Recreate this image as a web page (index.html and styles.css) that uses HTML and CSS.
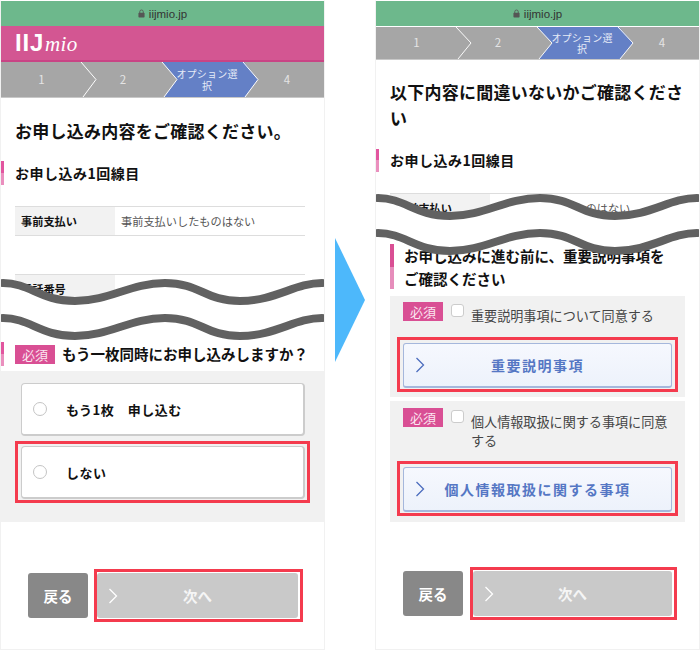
FILE: index.html
```html
<!DOCTYPE html>
<html lang="ja">
<head>
<meta charset="utf-8">
<title>IIJmio</title>
<link rel="stylesheet" href="styles.css">
</head>
<body>
<main class="page">
  <section class="phone">
    <div class="urlbar"><svg class="lock" viewBox="0 0 8 10"><path d="M2 4.500V3a2 2 0 0 1 4 0v1.500" fill="none" stroke="#555" stroke-width="1"/><rect x=".5" y="4.200" width="7" height="5.300" rx=".8" fill="#555"/></svg>iijmio.jp</div>
    <header class="brand"><span class="logo-main">IIJ</span><span class="logo-sub">mio</span></header>
    <div class="steps">
      <svg class="steps-bg" viewBox="0 0 323 36" preserveAspectRatio="none"><polygon points="161,0 243,0 257,18 244,36 163,36 176,18" fill="#6480c6"/><polyline points="80,0 95,18 82,36" fill="none" stroke="#fff" stroke-width="1"/><polyline points="161,0 176,18 163,36" fill="none" stroke="#fff" stroke-width="1"/><polyline points="242,0 257,18 244,36" fill="none" stroke="#fff" stroke-width="1"/></svg>
      <span class="step">1</span><span class="step">2</span><span class="step step-active">オプション選択</span><span class="step">4</span>
    </div>
    <h1 class="title">お申し込み内容をご確認ください。</h1>
    <h2 class="bar-head">お申し込み1回線目</h2>
    <dl class="row row-first"><dt>事前支払い</dt><dd>事前支払いしたものはない</dd></dl>
    <dl class="row row-second"><dt>電話番号</dt><dd></dd></dl>
    <div class="ask"><span class="badge">必須</span><span class="ask-text">もう一枚同時にお申し込みしますか？</span></div>
    <div class="choices">
      <div class="choice"><span class="radio"></span>もう1枚　申し込む</div>
      <div class="choice mark"><span class="radio"></span>しない</div>
    </div>
    <div class="actions actions-left">
      <a class="back">戻る</a>
      <a class="next mark"><svg class="chev" viewBox="0 0 10 16"><polyline points="1.500,1 8.500,8 1.500,15" fill="none" stroke="#fff" stroke-width="1.300"/></svg>次へ</a>
    </div>
    <svg class="wave wave-left" viewBox="0 0 325 66"><path d="M3 6C30 6 40 24 75 24S130 6 165 6S205 24 240 24S295 6 322 6V41C295 41 275 59 240 59S200 41 165 41S110 59 75 59S30 41 3 41Z" fill="#fff"/><g fill="none" stroke="#616161" stroke-width="8" stroke-linecap="round"><path d="M3 6C30 6 40 24 75 24S130 6 165 6S205 24 240 24S295 6 322 6"/><path d="M3 41C30 41 40 59 75 59S130 41 165 41S205 59 240 59S295 41 322 41"/></g></svg>
  </section>

  <div class="flow-arrow"><svg viewBox="0 0 30 124"><polygon points="0,0 30,62 0,124" fill="#4db8fb"/></svg></div>

  <section class="phone">
    <div class="urlbar"><svg class="lock" viewBox="0 0 8 10"><path d="M2 4.500V3a2 2 0 0 1 4 0v1.500" fill="none" stroke="#555" stroke-width="1"/><rect x=".5" y="4.200" width="7" height="5.300" rx=".8" fill="#555"/></svg>iijmio.jp</div>
    <div class="steps steps-compact">
      <svg class="steps-bg" viewBox="0 0 323 36" preserveAspectRatio="none"><polygon points="161,0 243,0 257,18 244,36 163,36 176,18" fill="#6480c6"/><polyline points="80,0 95,18 82,36" fill="none" stroke="#fff" stroke-width="1"/><polyline points="161,0 176,18 163,36" fill="none" stroke="#fff" stroke-width="1"/><polyline points="242,0 257,18 244,36" fill="none" stroke="#fff" stroke-width="1"/></svg>
      <span class="step">1</span><span class="step">2</span><span class="step step-active">オプション選択</span><span class="step">4</span>
    </div>
    <h1 class="title title-wrap">以下内容に間違いないかご確認ください</h1>
    <h2 class="bar-head bar-head-compact">お申し込み1回線目</h2>
    <dl class="row row-first row-compact"><dt>事前支払い</dt><dd>事前支払いしたものはない</dd></dl>
    <h2 class="notice">お申し込みに進む前に、重要説明事項をご確認ください</h2>
    <div class="agree agree-first">
      <div class="agree-head"><span class="badge">必須</span><span class="check"></span><span class="agree-text">重要説明事項について同意する</span></div>
      <a class="doc mark"><svg class="chev" viewBox="0 0 10 16"><polyline points="1.500,1 8.500,8 1.500,15" fill="none" stroke="#4c6dbe" stroke-width="1.300"/></svg>重要説明事項</a>
    </div>
    <div class="agree">
      <div class="agree-head"><span class="badge">必須</span><span class="check"></span><span class="agree-text">個人情報取扱に関する事項に同意する</span></div>
      <a class="doc mark"><svg class="chev" viewBox="0 0 10 16"><polyline points="1.500,1 8.500,8 1.500,15" fill="none" stroke="#4c6dbe" stroke-width="1.300"/></svg>個人情報取扱に関する事項</a>
    </div>
    <div class="actions actions-right">
      <a class="back">戻る</a>
      <a class="next mark"><svg class="chev" viewBox="0 0 10 16"><polyline points="1.500,1 8.500,8 1.500,15" fill="none" stroke="#fff" stroke-width="1.300"/></svg>次へ</a>
    </div>
    <svg class="wave wave-right" viewBox="0 0 325 66"><path d="M3 6C30 6 40 24 75 24S130 6 165 6S205 24 240 24S295 6 322 6V41C295 41 275 59 240 59S200 41 165 41S110 59 75 59S30 41 3 41Z" fill="#fff"/><g fill="none" stroke="#616161" stroke-width="8" stroke-linecap="round"><path d="M3 6C30 6 40 24 75 24S130 6 165 6S205 24 240 24S295 6 322 6"/><path d="M3 41C30 41 40 59 75 59S130 41 165 41S205 59 240 59S295 41 322 41"/></g></svg>
  </section>
</main>
</body>
</html>
```

FILE: styles.css
```css
* { box-sizing: border-box; }
html, body { margin: 0; padding: 0; background: #fff; }
body { font-family: "Noto Sans CJK JP", "Liberation Sans", sans-serif; color: #111; }
.page { display: flex; align-items: flex-start; width: 700px; height: 650px; overflow: hidden; }
.phone { position: relative; width: 325px; height: 650px; border: 1px solid #f1f1f1; border-top-color: #fff; overflow: hidden; }
.urlbar { display: flex; align-items: center; justify-content: center; gap: 4px; height: 25px; background: #6db88c; color: #333; font: 11.5px "Liberation Sans", sans-serif; }
.lock { width: 7px; height: 9px; }
.brand { display: flex; align-items: baseline; height: 36px; padding: 5px 0 0 14px; background: #d35692; border-bottom: 2px solid #c94485; color: #fff; }
.logo-main { font: bold 24px/24px "Liberation Sans", sans-serif; letter-spacing: .8px; }
.logo-sub { font: italic 21px/24px "Liberation Serif", serif; margin-left: 1px; letter-spacing: .3px; }
.steps { position: relative; display: grid; grid-template-columns: 81px 82px 86px 74px; align-items: center; height: 36px; background: #a6a6a6; border-bottom: 1px solid #c8c8c8; color: #e4e4e4; }
.steps-compact { height: 33px; margin-top: 1px; }
.steps-bg { position: absolute; left: 0; top: 0; width: 323px; height: 100%; }
.step { position: relative; text-align: center; font-size: 11.500px; line-height: 11.500px; }
.step-active { width: 66px; justify-self: center; font-size: 10px; letter-spacing: .2px; color: #e6ebf7; }
.title { margin: 20px 14px 0; font-size: 17px; line-height: 26px; font-weight: 700; color: #111; letter-spacing: .25px; }
.title-wrap { margin-top: 19px; width: 298px; }
.bar-head { margin: 17px 0 0; height: 24px; padding-left: 11px; font-size: 14px; line-height: 24px; font-weight: 700; letter-spacing: .5px; border-left: 3px solid #e2559f; border-image: linear-gradient(#e2559f 50%, #ea8fbe 50%) 1; }
.bar-head-compact { margin-top: 18px; height: 23px; line-height: 23px; }
.row { display: flex; width: 290px; margin: 21px 0 0 14px; border-top: 1px solid #ddd; border-bottom: 1px solid #ddd; font-size: 11.200px; height: 30px; line-height: 28px; }
.row dt { width: 100px; padding-left: 6px; background: #f2f2f2; font-weight: 700; }
.row dd { margin: 0; padding-left: 6px; color: #555; }
.row-second { margin-top: 38px; height: 34px; border-bottom-color: #eee; }
.row-compact { margin-top: 21px; }
.ask { display: flex; align-items: center; height: 24px; margin-top: 34px; padding-left: 11px; border-left: 3px solid #e2559f; border-image: linear-gradient(#e2559f 50%, #ea8fbe 50%) 1; }
.ask-text { margin-left: 7px; font-size: 14.500px; font-weight: 700; line-height: 24px; white-space: nowrap; }
.badge { flex: none; width: 40px; height: 19px; background: #d94f94; color: #fbe6f0; text-align: center; font-size: 13px; line-height: 19px; }
.choices { display: flex; flex-direction: column; gap: 10px; height: 151px; margin-top: 5px; padding: 12px 19px 0 20px; background: #f1f1f1; }
.choice { position: relative; display: flex; align-items: center; height: 53px; padding-left: 11px; background: #fff; border: 1px solid #ccc; border-bottom-width: 2px; border-right-width: 2px; border-radius: 4px; font-size: 13px; font-weight: 700; letter-spacing: .5px; }
.radio { width: 14px; height: 14px; margin-right: 19px; border: 1.500px solid #c4c4c4; border-radius: 50%; background: #fff; }
.mark::after { content: ""; position: absolute; inset: -5px; border: 3px solid #f43b4e; }
.choice.mark::after { inset: -6px -7px -6px -7px; }
.actions { display: flex; margin: 51px 0 0 27px; height: 45px; }
.back { display: flex; align-items: center; justify-content: center; width: 60px; background: #888; border-radius: 3px; color: #fff; font-size: 14.500px; font-weight: 700; }
.next { display: flex; align-items: center; justify-content: center; position: relative; width: 201px; margin-left: 9px; background: #c9c9c9; border-radius: 3px; color: #f5f5f5; font-size: 14.500px; font-weight: 700; }
.next.mark::after { inset: -4px -5px -4px -3px; }
.actions-right { margin: 49px 0 0 27px; }
.actions-right .next { width: 199px; margin-left: 10px; }
.chev { position: absolute; left: 11px; top: 50%; width: 10px; height: 16px; margin-top: -8px; }
.notice { width: 280px; height: 45px; margin: 21px 0 0 14px; padding: 0 0 0 10px; font-size: 14.500px; line-height: 23px; font-weight: 700; border-left: 4px solid #d94f94; border-image: linear-gradient(#d94f94 50%, #e68dbb 50%) 1; }
.agree { width: 295px; margin: 4px 0 0 14px; padding: 7px 13px 10px; background: #f1f1f1; }
.agree-first { margin-top: 7px; padding-top: 6px; padding-bottom: 9px; }
.agree-head { display: flex; align-items: flex-start; min-height: 38px; margin-bottom: 17px; }
.agree-first .agree-head { min-height: 24px; }
.check { flex: none; width: 13px; height: 13px; margin: 2px 7px 0 8px; background: #fff; border: 1px solid #ccc; border-radius: 3px; }
.agree-text { margin-top: 4px; font-size: 13.100px; line-height: 19px; color: #444; }
.doc { display: flex; align-items: center; justify-content: center; position: relative; height: 45px; background: linear-gradient(#f6f8fe, #edf2fb); border: 1px solid #a5b7dc; border-bottom-width: 2px; border-radius: 3px; color: #5577c4; font-size: 14px; font-weight: 700; letter-spacing: 1.500px; }
.doc.mark::after { inset: -7px; bottom: -6px; }
.wave { position: absolute; left: -1px; width: 325px; height: 66px; }
.wave-left { top: 276px; }
.wave-right { top: 191px; }
.flow-arrow { flex: none; width: 50px; height: 124px; margin-top: 238px; padding-left: 10px; }
.flow-arrow svg { display: block; width: 30px; height: 124px; }
```
